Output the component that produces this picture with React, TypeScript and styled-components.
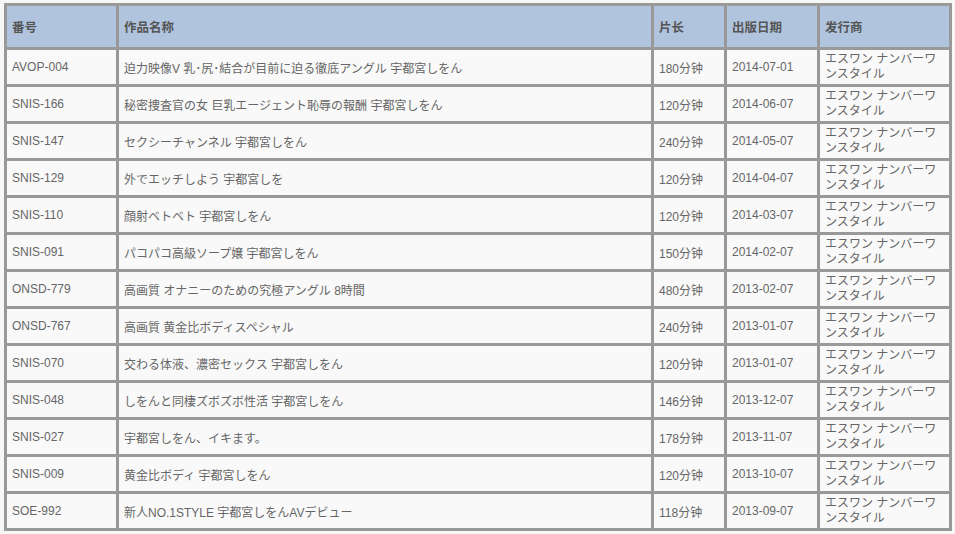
import styled, { createGlobalStyle } from 'styled-components';

const GlobalStyle = createGlobalStyle`
    html, body {
        margin: 0;
        padding: 0;
        background: #f7f7f7;
    }
    body {
        font-family: "Liberation Sans", "Noto Sans CJK SC", sans-serif;
        font-size: 12px;
        color: #666;
    }
`;

const Page = styled.div`
    padding: 3px 0 0 4px;
`;

const Table = styled.table`
    width: 948px;
    border-collapse: separate;
    border-spacing: 3px;
    background: #999;
    table-layout: fixed;
`;

// $w is the content width; each cell adds 5px padding on both sides
const HeadCell = styled.th<{ $w: number }>`
    width: ${(p) => p.$w}px;
    height: 41px;
    padding: 0 5px;
    background: #b0c4de;
    color: #555;
    font-weight: bold;
    font-size: 12.5px;
    text-align: left;
    vertical-align: middle;
`;

const Cell = styled.td<{ $wrap?: boolean }>`
    height: 34px;
    padding: 0 5px;
    background: #f9f9f9;
    color: #666;
    vertical-align: middle;
    line-height: ${(p) => (p.$wrap ? '15px' : 'normal')};
    white-space: ${(p) => (p.$wrap ? 'normal' : 'nowrap')};
    overflow: hidden;
`;

const columns = [
    { label: '番号', w: 99 },
    { label: '作品名称', w: 522 },
    { label: '片长', w: 60 },
    { label: '出版日期', w: 80 },
    { label: '发行商', w: 119 },
];

const rows = [
    ['AVOP-004', '迫力映像V 乳･尻･結合が目前に迫る徹底アングル 宇都宮しをん', '180分钟', '2014-07-01'],
    ['SNIS-166', '秘密捜査官の女 巨乳エージェント恥辱の報酬 宇都宮しをん', '120分钟', '2014-06-07'],
    ['SNIS-147', 'セクシーチャンネル 宇都宮しをん', '240分钟', '2014-05-07'],
    ['SNIS-129', '外でエッチしよう 宇都宮しを', '120分钟', '2014-04-07'],
    ['SNIS-110', '顔射ベトベト 宇都宮しをん', '120分钟', '2014-03-07'],
    ['SNIS-091', 'パコパコ高級ソープ嬢 宇都宮しをん', '150分钟', '2014-02-07'],
    ['ONSD-779', '高画質 オナニーのための究極アングル 8時間', '480分钟', '2013-02-07'],
    ['ONSD-767', '高画質 黄金比ボディスペシャル', '240分钟', '2013-01-07'],
    ['SNIS-070', '交わる体液、濃密セックス 宇都宮しをん', '120分钟', '2013-01-07'],
    ['SNIS-048', 'しをんと同棲ズボズボ性活 宇都宮しをん', '146分钟', '2013-12-07'],
    ['SNIS-027', '宇都宮しをん、イキます。', '178分钟', '2013-11-07'],
    ['SNIS-009', '黄金比ボディ 宇都宮しをん', '120分钟', '2013-10-07'],
    ['SOE-992', '新人NO.1STYLE 宇都宮しをんAVデビュー', '118分钟', '2013-09-07'],
];

const publisher = 'エスワン ナンバーワンスタイル';

export default function App() {
    return (
        <Page>
            <GlobalStyle />
            <Table>
                <thead>
                    <tr>
                        {columns.map((c) => (
                            <HeadCell key={c.label} $w={c.w}>{c.label}</HeadCell>
                        ))}
                    </tr>
                </thead>
                <tbody>
                    {rows.map((r) => (
                        <tr key={r[0]}>
                            <Cell>{r[0]}</Cell>
                            <Cell>{r[1]}</Cell>
                            <Cell>{r[2]}</Cell>
                            <Cell>{r[3]}</Cell>
                            <Cell $wrap>{publisher}</Cell>
                        </tr>
                    ))}
                </tbody>
            </Table>
        </Page>
    );
}
